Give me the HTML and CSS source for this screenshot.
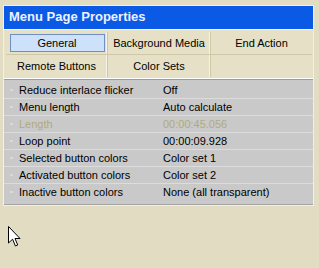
FILE: index.html
```html
<!DOCTYPE html>
<html lang="en">

<head>
    <meta charset="UTF-8">
    <meta name="viewport" content="width=device-width, initial-scale=1.0">
    <title>Menu Page Properties</title>
    <link rel="stylesheet" href="styles.css">
</head>

<body>
    <div class="window">
        <div class="title">Menu Page Properties</div>
        <!-- tab buttons -->
        <div class="tabs">
            <div class="tab first"><span class="active">General</span></div>
            <div class="tab">Background Media</div>
            <div class="tab last">End Action</div>
            <div class="tab first bottom">Remote Buttons</div>
            <div class="tab bottom">Color Sets</div>
            <div class="tab last bottom"></div>
        </div>
        <!-- property list -->
        <div class="props">
            <div class="row"><span class="mark"></span><span class="name">Reduce interlace flicker</span><span class="value">Off</span></div>
            <div class="row"><span class="mark"></span><span class="name">Menu length</span><span class="value">Auto calculate</span></div>
            <div class="row disabled"><span class="mark"></span><span class="name">Length</span><span class="value">00:00:45.056</span></div>
            <div class="row"><span class="mark"></span><span class="name">Loop point</span><span class="value">00:00:09.928</span></div>
            <div class="row"><span class="mark"></span><span class="name">Selected button colors</span><span class="value">Color set 1</span></div>
            <div class="row"><span class="mark"></span><span class="name">Activated button colors</span><span class="value">Color set 2</span></div>
            <div class="row"><span class="mark"></span><span class="name">Inactive button colors</span><span class="value">None (all transparent)</span></div>
        </div>
    </div>
    <svg class="cursor" width="13" height="22" viewBox="0 0 13 22">
        <path d="M0.5 0.5 L0.5 17 L4.6 13.2 L7.4 20 L9.7 19 L7 12.5 L12 12.5 Z" fill="#ffffff" stroke="#000000" stroke-width="1" stroke-linejoin="miter"/>
    </svg>
</body>

</html>
```

FILE: styles.css
```css
* {
    margin: 0;
    padding: 0;
    box-sizing: border-box;
}

body {
    position: relative;
    width: 319px;
    height: 268px;
    background-color: #e2ddc2;
    font-family: "Liberation Sans", Arial, sans-serif;
    font-size: 11px;
    color: #000;
    padding: 5px 0 0 3px;
}

.window {
    width: 311px;
    border: 1px solid #f2f0e4;
    background-color: #e5e0c6;
}

.title {
    height: 23px;
    line-height: 22px;
    padding-left: 5px;
    background-color: #0b5ae6;
    color: #eef2ff;
    font-size: 13px;
    font-weight: bold;
}

.tabs {
    display: grid;
    grid-template-columns: 102px 103px 1fr;
    grid-template-rows: 23px 22px;
    padding: 2px 1px 1px 2px;
    border-top: 1px solid #f8f6ee;
    border-bottom: 1px solid #ffffff;
}

.tab {
    display: flex;
    align-items: center;
    justify-content: center;
    border-right: 1px solid #cfc8a8;
    box-shadow: inset -1px 0 0 #f6f4ea;
    border-bottom: 1px solid #cfc8a8;
}

.tab.bottom {
    border-bottom: none;
}

.tab.last {
    border-right: none;
    box-shadow: none;
}

.tab .active {
    display: flex;
    align-items: center;
    justify-content: center;
    width: 95px;
    height: 18px;
    margin-left: 1px;
    background-color: #cde2fa;
    border: 1px solid #6f8fbf;
}

.props {
    background-color: #c9c9c9;
    border-top: 1px solid #9c9c9c;
    border-bottom: 1px solid #a4a4a4;
    padding: 2px 0 3px;
}

.row {
    display: grid;
    grid-template-columns: 15px 144px 1fr;
    height: 17px;
    line-height: 16px;
    border-bottom: 1px solid #dcdcdc;
}

.row:last-child {
    border-bottom: none;
}

.mark {
    width: 3px;
    height: 2px;
    margin: 7px 0 0 6px;
    background-color: #dadada;
}

.disabled {
    color: #b2a97b;
}

.cursor {
    position: absolute;
    left: 8px;
    top: 226px;
}
```
